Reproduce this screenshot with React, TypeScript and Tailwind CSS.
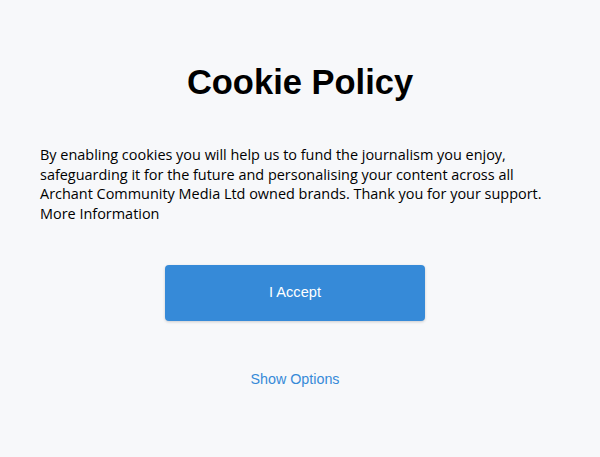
export default function App() {
  return (
    <div className="min-h-screen w-full bg-[#f7f8fa]">
      <div className="mx-auto flex w-[600px] flex-col items-center px-10 pt-[58px]">
        {/* Heading */}
        <h1 className="font-['Liberation_Sans',Arial,sans-serif] text-[34.5px] leading-[48px] font-bold text-black">
          Cookie Policy
        </h1>

        {/* Body copy */}
        <p className="mt-[39px] w-[528px] self-start font-['Open_Sans',sans-serif] text-[14.45px] leading-[19.6px] text-black">
          By enabling cookies you will help us to fund the journalism you enjoy,
          safeguarding it for the future and personalising your content across all
          Archant Community Media Ltd owned brands. Thank you for your support.
          <a className="block text-black">More Information</a>
        </p>

        {/* Actions */}
        <div className="flex flex-col items-center pr-[10px]">
          <button className="mt-[42px] h-[56px] w-[260px] rounded bg-[#368ad8] font-['Liberation_Sans',Arial,sans-serif] text-[14.6px] text-white shadow-[0_1px_3px_rgba(0,0,0,0.18)]">
            I Accept
          </button>

          <button className="mt-[48px] font-['Liberation_Sans',Arial,sans-serif] text-[14.3px] text-[#368ad8]">
            Show Options
          </button>
        </div>
      </div>
    </div>
  )
}
